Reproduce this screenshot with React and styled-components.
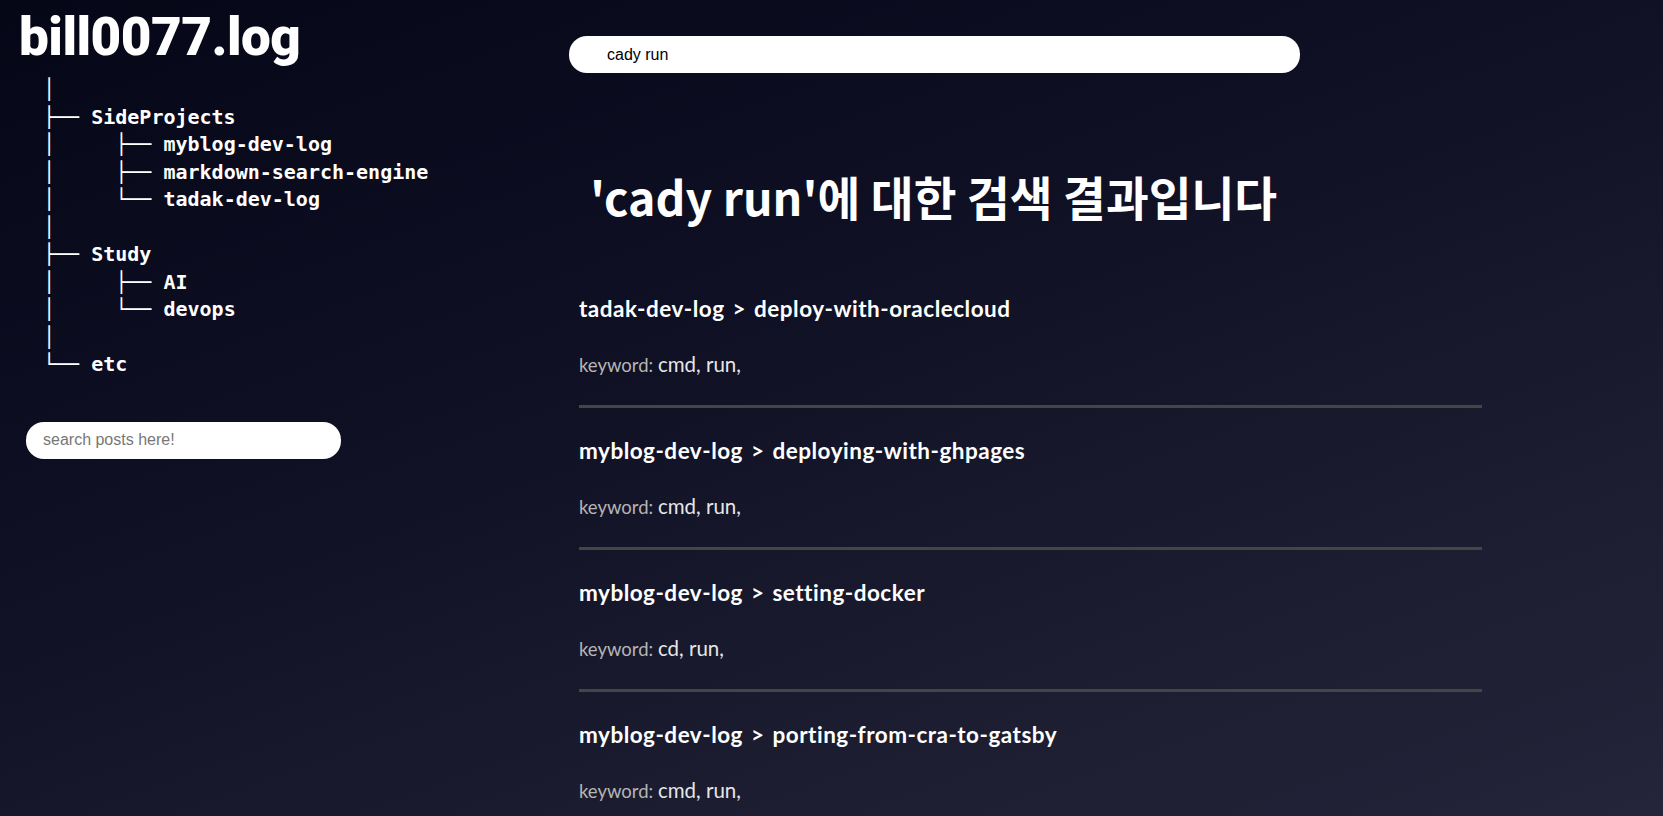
import React, { useState } from "react";
import styled, { createGlobalStyle } from "styled-components";

const tree = [
    { prefix: "│", name: "" },
    { prefix: "├── ", name: "SideProjects" },
    { prefix: "│     ├── ", name: "myblog-dev-log" },
    { prefix: "│     ├── ", name: "markdown-search-engine" },
    { prefix: "│     └── ", name: "tadak-dev-log" },
    { prefix: "│", name: "" },
    { prefix: "├── ", name: "Study" },
    { prefix: "│     ├── ", name: "AI" },
    { prefix: "│     └── ", name: "devops" },
    { prefix: "│", name: "" },
    { prefix: "└── ", name: "etc" },
];

const results = [
    { series: "tadak-dev-log", post: "deploy-with-oraclecloud", keywords: "cmd, run," },
    { series: "myblog-dev-log", post: "deploying-with-ghpages", keywords: "cmd, run," },
    { series: "myblog-dev-log", post: "setting-docker", keywords: "cd, run," },
    { series: "myblog-dev-log", post: "porting-from-cra-to-gatsby", keywords: "cmd, run," },
];

export default function App() {
    const [query, setQuery] = useState("cady run");

    return (
        <>
            <GlobalStyle />
            <Page>
                <Sidebar>
                    <Logo>bill0077.log</Logo>
                    <Tree>
                        {tree.map((row, i) => (
                            <TreeRow key={i}>
                                <Branch>{row.prefix}</Branch>
                                <TreeName>{row.name}</TreeName>
                            </TreeRow>
                        ))}
                    </Tree>
                    <SideSearch placeholder="search posts here!" />
                </Sidebar>
                <Main>
                    <MainSearch
                        value={query}
                        onChange={(e) => setQuery(e.currentTarget.value)}
                    />
                    <Heading>'{query}'에 대한 검색 결과입니다</Heading>
                    <ResultList>
                        {results.map((r, i) => (
                            <ResultItem key={i}>
                                <ResultTitle>
                                    {r.series} &gt; {r.post}
                                </ResultTitle>
                                <KeywordLine>
                                    <KeywordLabel>keyword: </KeywordLabel>
                                    {r.keywords}
                                </KeywordLine>
                            </ResultItem>
                        ))}
                    </ResultList>
                </Main>
            </Page>
        </>
    );
}

const GlobalStyle = createGlobalStyle`
    * {
        box-sizing: border-box;
    }
    html, body {
        margin: 0;
        padding: 0;
        height: 100%;
        overflow: hidden;
    }
    body {
        background: #0b0c1f;
    }
`;
const Page = styled.div`
    display: grid;
    grid-template-columns: 569px 1fr;
    height: 816px;
    overflow: hidden;
    background: linear-gradient(160deg, #050616 0%, #0f1024 40%, #1c1d30 75%, #24243a 100%);
    color: #fff;
`;
const Sidebar = styled.aside`
    display: flex;
    flex-direction: column;
    padding: 4px 0 0 19px;
`;
const Logo = styled.h1`
    margin: 0;
    font-family: Roboto, "Liberation Sans", sans-serif;
    font-weight: 900;
    font-size: 53px;
    line-height: 66px;
    letter-spacing: -0.5px;
    color: #fff;
`;
const Tree = styled.div`
    margin: 6px 0 0 24px;
    font-family: "DejaVu Sans Mono", "Liberation Mono", monospace;
    font-size: 20px;
    line-height: 27.5px;
    white-space: pre;
`;
const TreeRow = styled.div`
    display: flex;
    height: 27.5px;
`;
const Branch = styled.span`
    font-weight: 400;
`;
const TreeName = styled.span`
    font-weight: 700;
`;
const SideSearch = styled.input`
    margin: 43px 0 0 7px;
    width: 315px;
    height: 37px;
    border: none;
    border-radius: 18px;
    padding: 0 17px;
    font-family: "Liberation Sans", Arial, sans-serif;
    font-size: 16px;
    outline: none;
    background: #fff;
    &::placeholder {
        color: #777;
    }
`;
const Main = styled.main`
    display: flex;
    flex-direction: column;
    padding-top: 36px;
`;
const MainSearch = styled.input`
    width: 731px;
    height: 37px;
    border: none;
    border-radius: 18px;
    padding: 0 38px;
    font-family: "Liberation Sans", Arial, sans-serif;
    font-size: 16px;
    color: #000;
    outline: none;
    background: #fff;
`;
const Heading = styled.h2`
    margin: 93px 0 40px;
    padding-left: 21px;
    height: 60px;
    font-family: "Noto Sans CJK KR", "Noto Sans", sans-serif;
    font-weight: 700;
    font-size: 46.5px;
    line-height: 60px;
    color: #fff;
`;
const ResultList = styled.div`
    width: 903px;
    margin-left: 10px;
`;
const ResultItem = styled.div`
    padding: 28px 0 25px;
    border-bottom: 3px solid #454545;
`;
const ResultTitle = styled.div`
    font-family: Lato, "Noto Sans", sans-serif;
    font-weight: 700;
    font-size: 22.5px;
    line-height: 30px;
    color: #fff;
    letter-spacing: 0.5px;
    word-spacing: 2px;
`;
const KeywordLine = styled.div`
    margin-top: 25px;
    font-family: Lato, "Noto Sans", sans-serif;
    font-size: 20.5px;
    line-height: 30px;
    color: #e6e6e6;
`;
const KeywordLabel = styled.span`
    font-size: 18.5px;
    color: #b5b5b5;
`;
